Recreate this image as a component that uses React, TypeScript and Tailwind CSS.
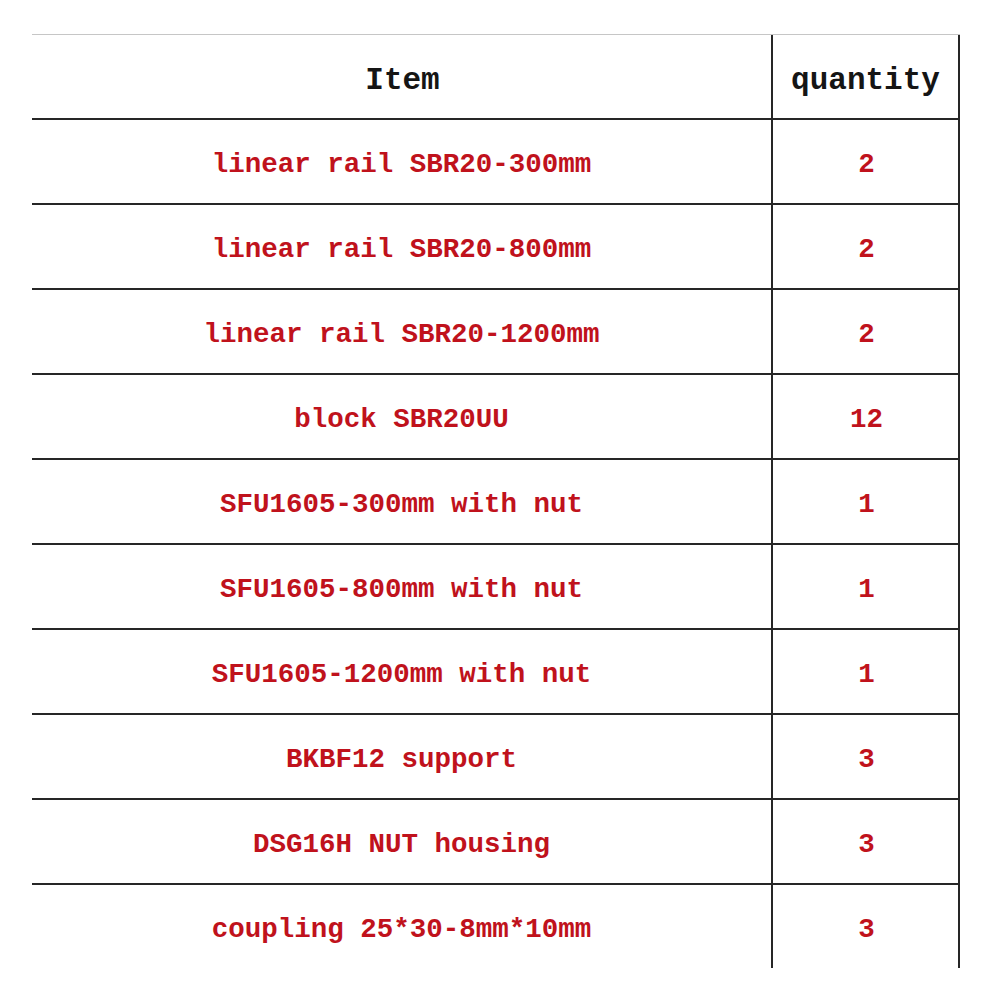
import React from 'react';

const rows: { item: string; qty: string }[] = [
    { item: 'linear rail SBR20-300mm', qty: '2' },
    { item: 'linear rail SBR20-800mm', qty: '2' },
    { item: 'linear rail SBR20-1200mm', qty: '2' },
    { item: 'block SBR20UU', qty: '12' },
    { item: 'SFU1605-300mm with nut', qty: '1' },
    { item: 'SFU1605-800mm with nut', qty: '1' },
    { item: 'SFU1605-1200mm with nut', qty: '1' },
    { item: 'BKBF12 support', qty: '3' },
    { item: 'DSG16H NUT housing', qty: '3' },
    { item: 'coupling 25*30-8mm*10mm', qty: '3' },
];

export default function App() {
    return (
        <div className="min-h-screen bg-white pt-[34px] pl-[32px] font-['Liberation_Mono',monospace]">
            <div className="w-[928px]">
                {/* Header */}
                <div className="grid grid-cols-[741px_187px] h-[86px] border-t border-b-2 border-t-[#c6c6c6] border-b-[#262626]">
                    <div className="flex items-center justify-center border-r-2 border-[#262626] text-[31px] font-bold text-[#151515] pl-[2px] pt-[10px]">
                        Item
                    </div>
                    <div className="flex items-center justify-center border-r-2 border-[#262626] text-[31px] font-bold text-[#151515] pt-[10px]">
                        quantity
                    </div>
                </div>

                {/* Body */}
                {rows.map((row, i) => (
                    <div
                        key={i}
                        className={
                            i === rows.length - 1
                                ? 'grid grid-cols-[741px_187px] h-[83px]'
                                : 'grid grid-cols-[741px_187px] h-[85px] border-b-2 border-[#262626]'
                        }
                    >
                        <div className="flex items-center justify-center border-r-2 border-[#262626] text-[27.5px] font-bold text-[#c0121c] pt-[6px]">
                            {row.item}
                        </div>
                        <div className="flex items-center justify-center border-r-2 border-[#262626] text-[27.5px] font-bold text-[#c0121c] pl-[2px] pt-[6px]">
                            {row.qty}
                        </div>
                    </div>
                ))}
            </div>
        </div>
    );
}
